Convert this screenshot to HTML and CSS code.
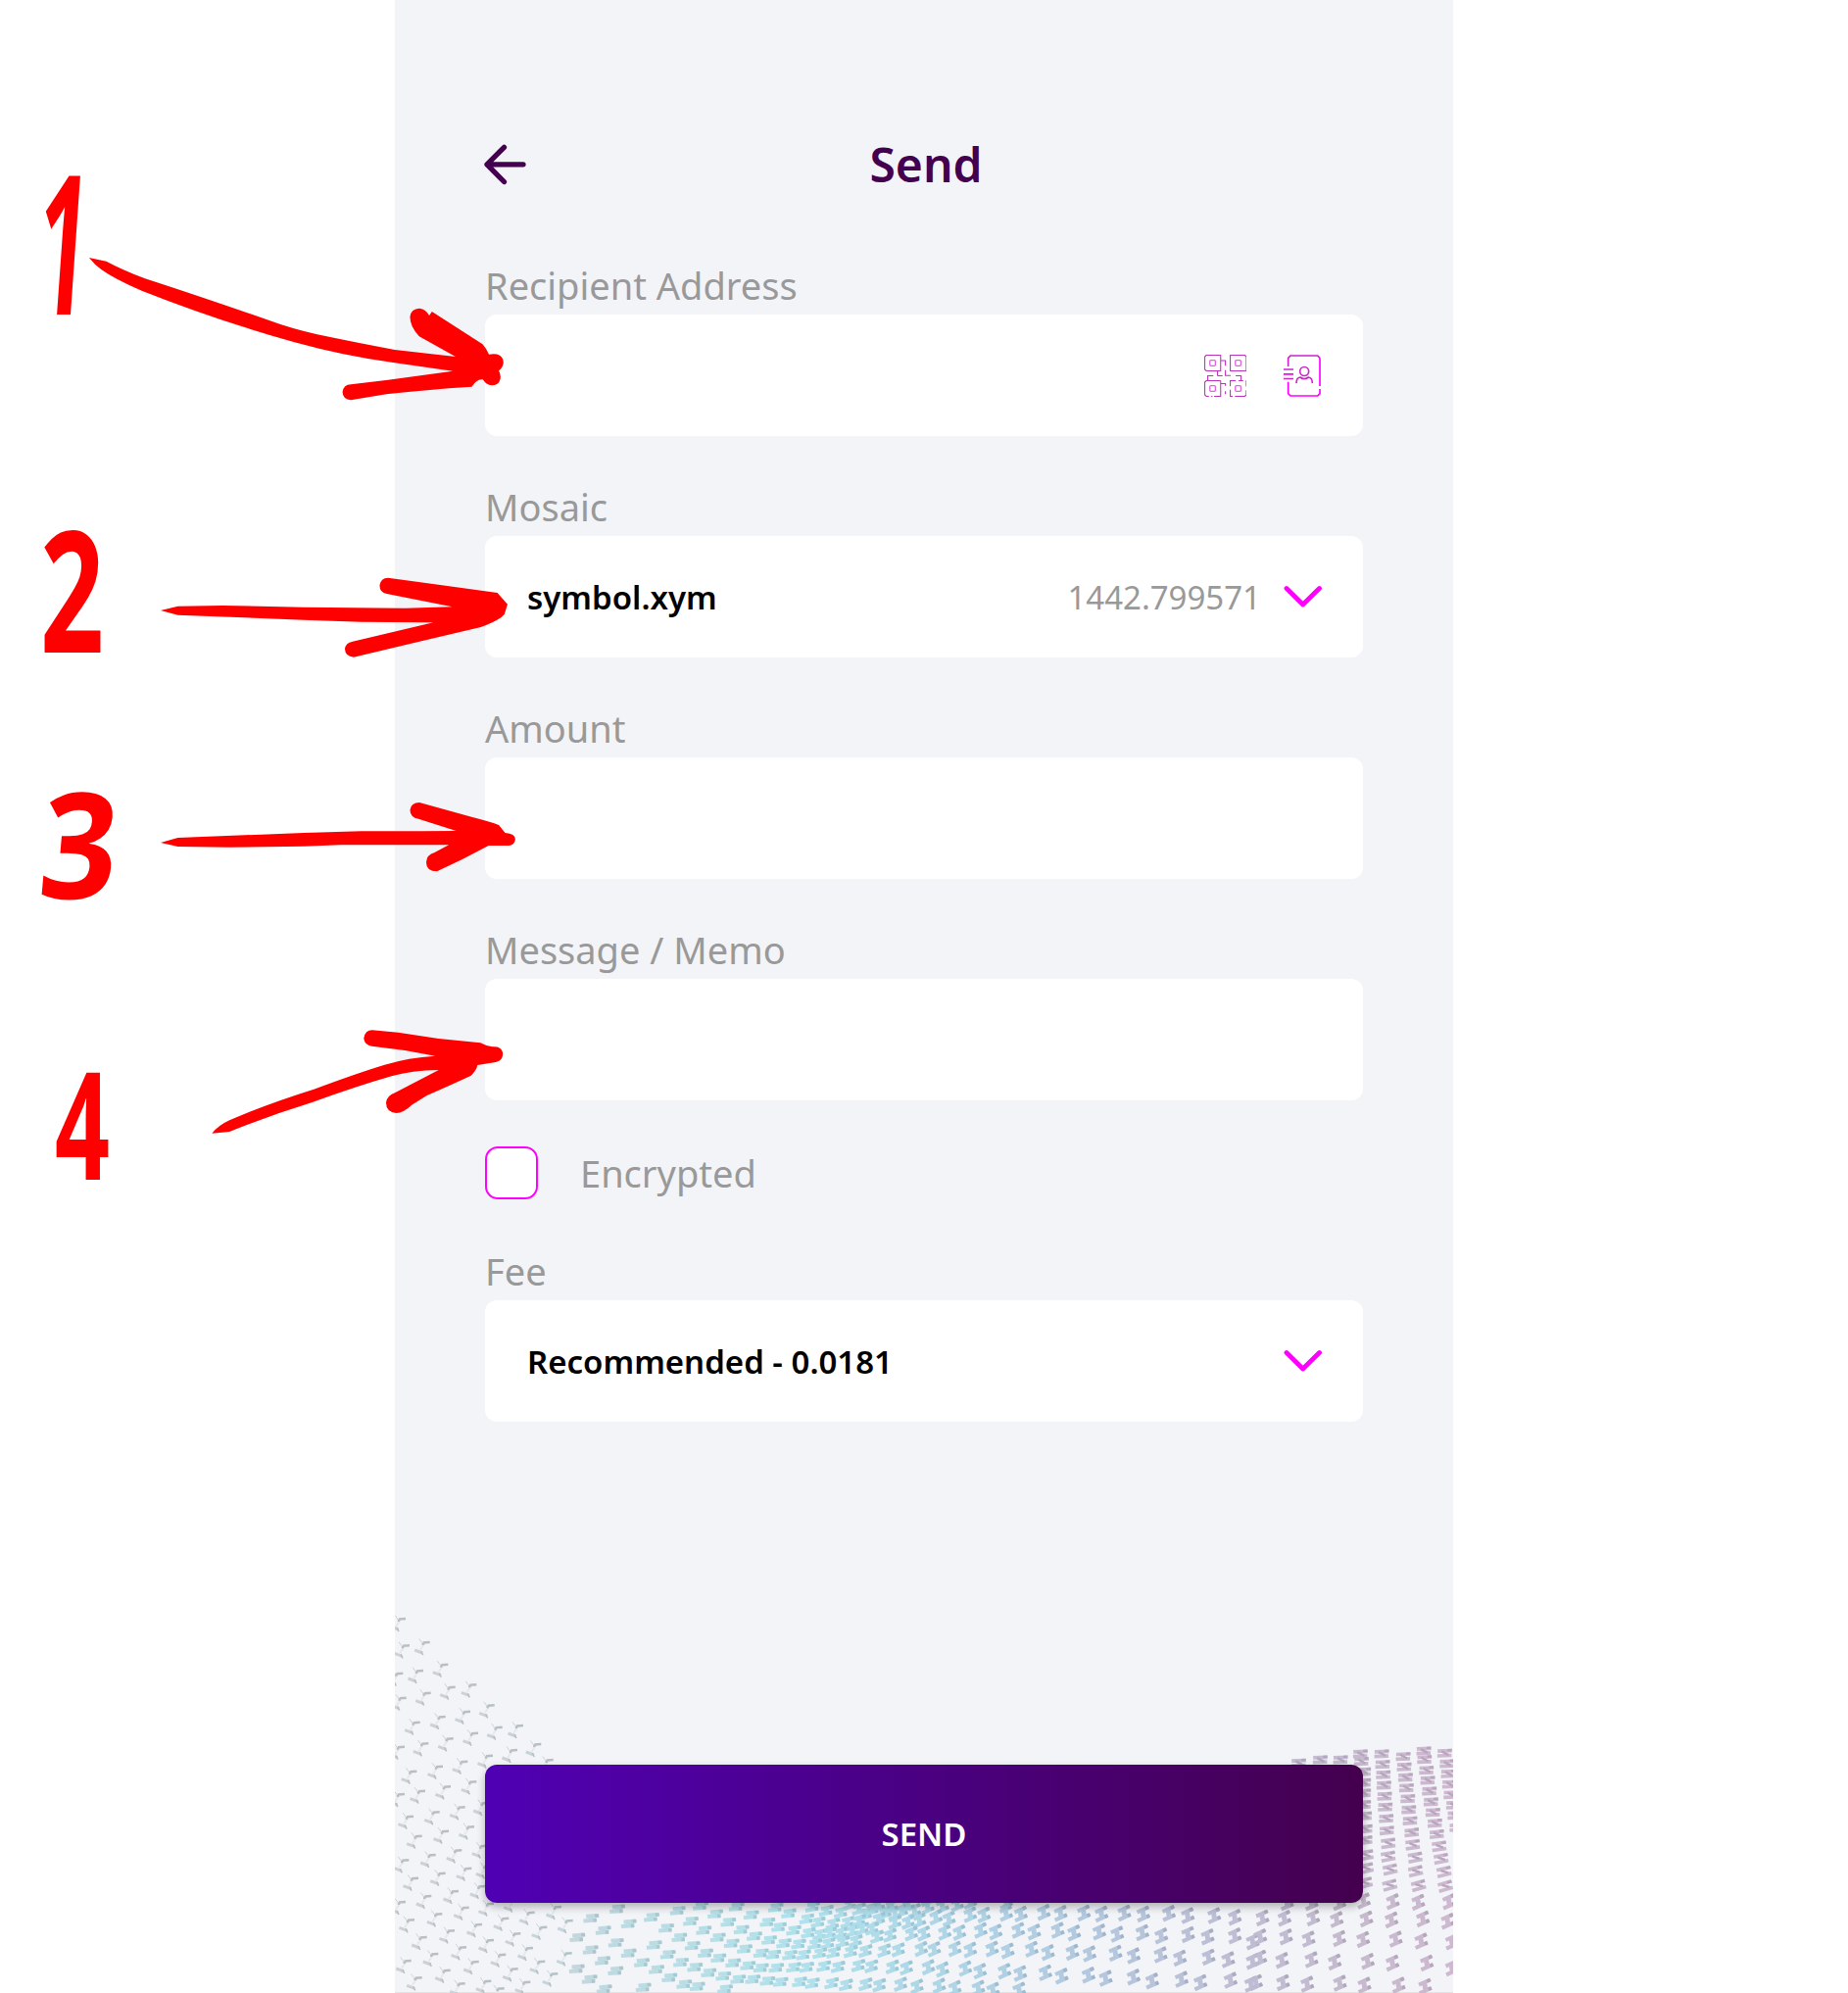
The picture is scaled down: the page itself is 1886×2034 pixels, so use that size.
FILE: index.html
```html
<!DOCTYPE html>
<html lang="en">
<head>
<meta charset="utf-8">
<title>Send</title>
<link rel="stylesheet" href="styles.css">
</head>
<body>
<main class="screen">
  <svg class="mesh" id="mesh" viewBox="403 1640 1080 394" aria-hidden="true"></svg>
  <header class="topbar">
    <svg class="back" viewBox="0 0 44 42"><path d="M41 20.8H4M21.5 3.3L4 20.8l17.500 17.700"/></svg>
    <h1 class="title">Send</h1>
  </header>
  <form class="form">
    <section class="field">
      <label class="label">Recipient Address</label>
      <div class="box">
        <span class="value"></span>
        <svg class="qr" viewBox="81 69 130 129">
          <path d="M131 118.500H87l-4.500-4.500V75l4.500-4.500h44zM160.500 70.500H205l4.500 4.500v43.500h-49zM131 148.500H87l-4.500 4.500v39l4.500 4.500h8M102 196.500h4M111 196.500h20v-48M160.500 166v-17.500H177M186 148.500h14M209.500 148v18M209.500 178v14l-4.500 4.500h-30M168 196.500h-7.500V176M131 87h14.500v16M145.500 116v17H162M121.500 119v15M91.500 148v-14.500h17M123 133.500h14M177 133.500h16.500V148M131 157.500h14.500v7M145.500 181v9"/>
          <g class="qr-eyes"><rect x="98" y="86" width="17" height="17" rx="3"/><rect x="176" y="86" width="17" height="17" rx="3"/><rect x="98" y="164" width="17" height="17" rx="3"/><rect x="176" y="164" width="17" height="17" rx="3"/></g>
        </svg>
        <svg class="book" viewBox="327 69 114 129">
          <path class="dim" d="M341 105V79l7-7h83l7 7M327 114h30M327 142.500h30"/>
          <path d="M438 79v86M438 174v14l-7 7h-83l-7-7v-36M327 128.500h30"/>
          <circle class="dim" cx="390.500" cy="120" r="13.500"/>
          <path class="dim" d="M366 156c0-10 4-17 12-18q12 10 25 0c8 1 12 8 12 18"/>
        </svg>
      </div>
    </section>
    <section class="field">
      <label class="label">Mosaic</label>
      <div class="box">
        <span class="value">symbol.xym</span>
        <span class="balance">1442.799571</span>
        <svg class="chevron" viewBox="0 0 40 24"><path d="M3 3.500L19.700 20 36.500 3.500"/></svg>
      </div>
    </section>
    <section class="field">
      <label class="label">Amount</label>
      <div class="box"></div>
    </section>
    <section class="field">
      <label class="label">Message / Memo</label>
      <div class="box"></div>
    </section>
    <div class="check-row">
      <span class="checkbox"></span>
      <span class="check-label">Encrypted</span>
    </div>
    <section class="field">
      <label class="label">Fee</label>
      <div class="box">
        <span class="value">Recommended - 0.0181</span>
        <svg class="chevron" viewBox="0 0 40 24"><path d="M3 3.500L19.700 20 36.500 3.500"/></svg>
      </div>
    </section>
    <button class="send" type="button">SEND</button>
  </form>
</main>

<svg class="notes" viewBox="0 0 560 2034">
  <text class="num" transform="translate(34 321) skewX(-4) scale(.92 1.98)">1</text>
  <text class="num" transform="translate(41 666) scale(1.14 1.72)">2</text>
  <text class="num" transform="translate(37 917) skewX(-5) scale(1.38 1.5)">3</text>
  <text class="num" transform="translate(56 1204) scale(.98 1.52)">4</text>
  <g transform="translate(0 150) scale(.34439 .33333)">
    <path d="M264 339L315 350Q360 375 430 403Q600 460 800 532Q860 555 940 574Q1060 600 1170 621L1350 642L1242 580Q1215 550 1215 520Q1218 495 1243 494Q1262 496 1272 516L1280 504L1430 604Q1442 618 1449 635Q1490 628 1492 660Q1490 676 1478 685Q1486 700 1482 712Q1478 730 1457 730Q1440 728 1431 712Q1414 708 1398 734Q1260 743 1145 757L1040 775Q1015 772 1015 750Q1018 728 1040 727L1150 713L1342 686L1170 661Q1020 640 870 597Q640 530 420 440Q340 405 300 375Q280 360 264 339Z"/>
  </g>
  <g transform="translate(0 520) scale(.34439 .33333)">
    <path d="M476 309L527 296L660 294L900 299L1200 302L1340 298L1146 258Q1125 255 1125 232Q1128 210 1150 209L1310 232L1474 255L1504 290L1495 320Q1480 340 1425 360L1240 405L1048 452Q1023 450 1022 427Q1024 408 1045 404L1284 346L1070 344L900 338L527 323Z"/>
    <path d="M476 1020L527 1005L900 990L1070 985H1250L1352 984L1240 947Q1216 943 1215 920Q1218 897 1243 897L1400 942Q1450 955 1478 966L1497 990Q1527 992 1527 1010Q1525 1028 1507 1029H1448L1370 1071L1295 1108Q1263 1108 1263 1080Q1264 1057 1288 1050L1330 1027L1010 1027L900 1031L680 1034L527 1032Z"/>
  </g>
  <g transform="translate(0 1030) scale(.34439 .33333)">
    <path d="M628 380Q648 355 680 340Q790 290 930 245Q1060 195 1140 170Q1210 148 1290 143L1200 126L1102 113Q1080 109 1078 89Q1082 64 1103 64L1180 71L1300 90L1424 103Q1440 113 1460 115Q1490 113 1490 139Q1488 160 1465 163L1415 171Q1412 187 1396 203Q1340 230 1265 264L1220 293Q1195 318 1174 318Q1144 315 1144 286Q1145 265 1173 254L1300 186Q1220 187 1160 205Q1060 235 925 285Q800 325 680 375Z"/>
  </g>
</svg>
<script src="mesh.js"></script>
</body>
</html>
```
FILE: styles.css
```css
* { box-sizing: border-box; }
body {
  margin: 0;
  height: 2034px;
  overflow: hidden;
  position: relative;
  background: #fff;
  font-family: "Noto Sans", sans-serif;
}
.screen {
  position: relative;
  width: 1080px;
  height: 2034px;
  margin-left: 403px;
  padding: 132px 92px 0;
  background: #f3f4f8;
  border-bottom: 1px solid #e2e2e4;
}
.mesh {
  position: absolute;
  left: 0;
  bottom: -1px;
  width: 1080px;
  height: 394px;
}
.topbar {
  display: grid;
  grid-template-columns: 46px 1fr 42px;
  align-items: center;
  height: 72px;
  margin-bottom: 61px;
}
.back { width: 44px; height: 42px; margin-left: -2px; fill: none; stroke: #44004e; stroke-width: 5.3; stroke-linecap: round; stroke-linejoin: round; }
.title { margin: 0; font-size: 48px; font-weight: 600; line-height: 72px; text-align: center; color: #44004e; }
.form { position: relative; display: flex; flex-direction: column; }
.field { margin-bottom: 46px; }
.label { display: block; height: 56px; font-size: 38px; line-height: 52px; color: #999; }
.box {
  display: flex;
  align-items: center;
  height: 124px;
  padding: 0 42px 0 43px;
  background: #fff;
  border-radius: 12px;
}
.value { flex: 1; font-size: 33px; font-weight: 600; color: #000; }
.balance { font-size: 33px; color: #999; margin-right: 23px; }
.chevron { width: 40px; height: 24px; margin-right: -1px; fill: none; stroke: #f0f; stroke-width: 4.8; stroke-linecap: round; stroke-linejoin: round; }
.qr { width: 43.500px; height: 43px; margin-right: 38px; fill: none; stroke: #c030c0; stroke-width: 3.200; }
.qr-eyes { stroke: #e065e0; stroke-width: 4; }
.book { width: 38px; height: 43px; margin-right: 1px; fill: none; stroke: #f0f; stroke-width: 5; }
.book .dim { stroke: #c828c8; }
.check-row { display: flex; align-items: center; height: 56px; margin-bottom: 46px; }
.checkbox { width: 54px; height: 54px; background: #fff; border: 2.500px solid #f0f; border-radius: 13px; }
.check-label { margin-left: 43px; font-size: 38px; line-height: 52px; color: #999; }
.send {
  height: 141px;
  margin-top: 304px;
  padding: 0;
  border: 0;
  border-radius: 12px;
  background: linear-gradient(90deg, #5000b4, #44004e);
  box-shadow: 0 4px 8px rgba(0, 0, 0, .28);
  color: #fff;
  font: 600 33px "Noto Sans", sans-serif;
}
.notes { position: absolute; left: 0; top: 0; width: 560px; height: 2034px; fill: #f00; }
.num { font: bold 100px "Noto Sans", sans-serif; }
```
FILE: mesh.js
```js
// Decorative mesh behind the button: small linked pieces, tinted from grey through cyan to mauve.
const zones = [
  { x: 400, y: 1640, pts: "30,130 72,207 148,188 95,275 170,257 20,290 290,313 62,365 140,348 216,332 88,430 164,415 240,398 314,380 433,432 285,467 360,450 15,440 52,515 132,500 208,485 78,575 156,562 235,547 42,653 122,640 200,625 272,612 68,713 150,698 228,685 268,743 28,787 110,771 190,757 57,842 140,827 220,812 262,867 18,915 97,897 180,882 45,970 130,952 212,932 288,920 83,1023 168,1003 252,984 334,965 413,947 118,1074 204,1054 288,1032 370,1012 451,992 530,972 35,1095 242,1098 155,1124 325,1076 408,1056 568,1012 610,953 647,990 495,930 68,1147 362,1120 445,1097 527,1072 608,1050 686,1028 725,970 400,1160 484,1135 566,1108 645,1083 725,1060 803,1035 840,983 795,950 605,1140 685,1114 765,1089 845,1064 770,1165 810,1110 690,925 875,930 915,962 955,990 880,1012 920,1037 998,1012 990,940 1030,965 1070,988 1100,943 1110,1008 960,1060 1000,1075 1040,1030 1080,1047 885,1088 928,1103 970,1120 1045,1090 1090,1098 1130,1060 1130,1105 850,1135 895,1155 935,1162 1015,1130 1060,1140 1105,1140 1020,1170 945,915 1055,918 365,908 200,1165 280,1157 650,1170 320,1180 18,48 92,120 235,250 378,375 470,480 15,585 10,215 280,805" },
  { x: 780, y: 1920, pts: "35,80 75,98 148,78 130,115 190,90 235,95 262,70 165,125 210,130 45,140 90,150 10,125 290,85 310,100 330,85 255,125 290,120 370,95 400,98 350,115 420,90 460,90 500,78 545,75 350,72 390,75 440,72 400,125 440,125 475,120 525,110 565,115 630,102 672,103 740,98 785,100 855,95 907,98 978,97 1032,100 1102,97 1160,100 1238,98 1296,105 1377,105 1440,110 135,158 170,162 200,158 235,158 270,152 300,145 330,145 345,170 385,165 450,160 488,160 552,157 597,157 662,150 708,155 777,150 826,155 898,150 948,158 1025,155 1080,162 1157,157 1215,167 1297,163 1357,170 1440,167 1495,185 15,180 60,190 105,192 155,192 195,190 240,185 280,182 28,224 78,226 120,225 170,220 212,218 265,215 310,213 367,212 410,210 480,207 520,208 583,207 630,210 697,207 745,213 818,208 868,218 943,217 995,222 1075,220 1130,228 1213,225 1272,235 1360,232 1420,240 1495,245 37,265 90,263 130,263 182,260 226,262 288,258 328,260 392,262 435,265 502,263 545,270 615,267 660,275 735,275 783,282 860,280 910,290 992,287 1045,297 1130,293 1187,305 1277,300 1335,310 1427,303 1490,315 10,305 50,308 108,308 147,312 206,312 250,317 310,315 352,318 417,315 467,322 535,320 583,327 655,327 700,333 780,333 590,70 630,62 740,62" },
  { x: 1280, y: 1770, pts: "136,88 202,78 264,78 325,60 328,83 335,115 335,148 335,180 335,215 338,250 340,290 340,325 343,370 343,410 340,455 335,510 390,60 393,92 395,124 397,156 399,190 401,223 404,258 406,295 410,334 410,374 416,414 415,462 424,512 456,68 459,100 463,132 466,164 470,197 473,231 477,265 482,301 485,338 493,377 494,419 503,463 502,514 519,51 521,77 527,110 531,141 536,174 541,207 547,239 553,272 559,306 566,343 572,381 581,421 585,465 596,512 583,58 590,90 594,121 598,153 602,185 610,217 614,248 620,285 25,562 92,563 180,562 252,567 343,565 420,568 516,565 592,572 18,620 97,620 166,627 260,625 333,628 433,627 511,633 605,635 18,685 85,692 175,690 246,697 347,695 423,700 528,700 605,715 5,760 88,760 162,765 262,762 337,768 442,768 523,772 100,515 175,515 260,515" }
];
const stops = [[403, 201, 204, 208], [530, 196, 205, 211], [650, 181, 215, 222], [820, 169, 221, 232], [970, 168, 208, 226], [1120, 172, 194, 217], [1260, 184, 184, 207], [1380, 192, 179, 200], [1483, 200, 178, 202]];
function tint(x, d) {
  let i = 1;
  while (i < stops.length - 1 && stops[i][0] < x) i++;
  const a = stops[i - 1], b = stops[i], t = Math.max(0, Math.min(1, (x - a[0]) / (b[0] - a[0])));
  return "rgb(" + [1, 2, 3].map(k => Math.round(a[k] + (b[k] - a[k]) * t - d)).join() + ")";
}
let out = "";
zones.forEach((z, n) => z.pts.split(" ").forEach(p => {
  const [px, py] = p.split(",").map(Number), x = z.x + px / 3, y = z.y + py / 3;
  const light = tint(x, -4), dark = tint(x, 16);
  let g;
  if (n === 0 && px < 560) {
    g = `<path d="M-3-7.500l3 4" stroke="${light}"/><path d="M0-3l2 1-4 6" stroke="#e6e8eb" stroke-width="2"/><path d="M1-3.500l7-.5M1-3.500v2.500" stroke="${dark}" stroke-width="2.400"/><path d="M-7.500 4l8 3" stroke="${light}" stroke-width="3"/><path d="M-1 5l2 4" stroke="${dark}" stroke-width="1.500"/>`;
  } else if (n === 2 && py < 500) {
    const r = py < 240 ? 0 : -(py - 240) / 16, s = py < 330 ? 3 : 3.800;
    g = `<g transform="rotate(${r - 2})"><path d="M-7-${s - .6}H7.500M-7.500 ${s - .6}H7" stroke="${light}" stroke-width="3.600"/><path d="M-3-2L4 2M3-3h4.500" stroke="${dark}" stroke-width="2.400"/></g>`;
  } else {
    const k = n === 0 ? 0 : n === 1 ? Math.min(1, px / 500) : 1, r = -4 - 20 * k, h = 2.200 + 1.900 * (n === 2 ? 1 : k * Math.min(1, .6 + px / 2200));
    g = `<g transform="rotate(${r})"><path d="M-5-${h}H7M-8 ${h}H5" stroke="${light}" stroke-width="4"/><path d="M1-${h}L-1 ${h}" stroke="${light}" stroke-width="5"/><path d="M4-${h}h4M2 ${h}h3.500" stroke="${dark}" stroke-width="3.600"/></g>`;
  }
  out += `<g transform="translate(${x.toFixed(1)} ${y.toFixed(1)})" fill="none" opacity=".95">${g}</g>`;
}));
document.getElementById("mesh").innerHTML = out;
```
